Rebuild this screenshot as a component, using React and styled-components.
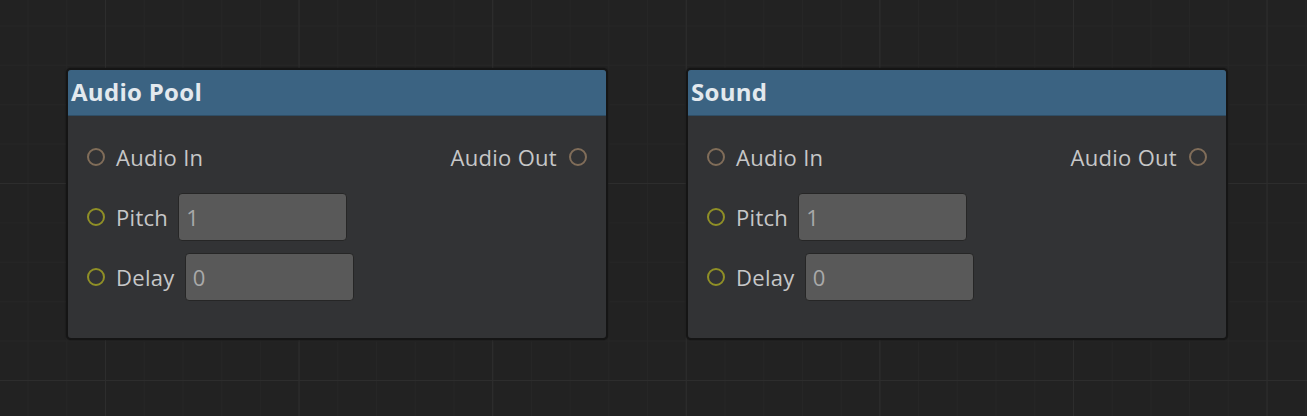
import React from "react";
import styled, { createGlobalStyle } from "styled-components";

const Global = createGlobalStyle`
  html, body { margin: 0; padding: 0; background: #222222; }
  body { font-family: "Open Sans", "Noto Sans", sans-serif; }
`;

const Canvas = styled.div`
  width: 1307px;
  height: 416px;
  box-sizing: border-box;
  padding: 68px 0 0 66px;
  display: flex;
  align-items: flex-start;
  gap: 78px;
  overflow: hidden;
  background-color: #222222;
  background-image:
    linear-gradient(to right, #2d2d2d 0, #2d2d2d 1px, transparent 1px),
    linear-gradient(to bottom, #2d2d2d 0, #2d2d2d 1px, transparent 1px),
    linear-gradient(to right, #262626 0, #262626 1px, transparent 1px),
    linear-gradient(to bottom, #262626 0, #262626 1px, transparent 1px);
  background-size: 193.6px 100%, 100% 197px, 38.72px 100%, 100% 39.4px;
  background-position: 105px 0, 0 183px, 105px 0, 0 183px;
`;

const Node = styled.div`
  width: 542px;
  height: 272px;
  box-sizing: border-box;
  border: 2px solid #151515;
  border-radius: 5px;
  background: #323335;
  overflow: hidden;
  display: flex;
  flex-direction: column;
  box-shadow: 0 0 2px rgba(0, 0, 0, 0.5);
`;

const Header = styled.div`
  height: 46px;
  flex: none;
  background: #3b6382;
  border-bottom: 1px solid #2f4e66;
  display: flex;
  align-items: center;
  padding: 0 0 3px 3px;
  box-sizing: border-box;
  color: #e3e9ee;
  font-weight: 700;
  font-size: 24px;
  letter-spacing: 0.3px;
`;

const Body = styled.div`
  padding: 17px 19px 0 19px;
  display: flex;
  flex-direction: column;
  gap: 12px;
`;

const Row = styled.div`
  height: 48px;
  display: flex;
  align-items: center;
  justify-content: ${(p) => (p.$split ? "space-between" : "flex-start")};
`;

const Port = styled.div`
  display: flex;
  align-items: center;
  gap: ${(p) => p.$gap || 11}px;
`;

const Socket = styled.span`
  width: 14px;
  height: 14px;
  flex: none;
  border-radius: 50%;
  border: 2px solid ${(p) => (p.$kind === "audio" ? "#806d59" : "#8f8f26")};
  box-sizing: content-box;
`;

const Label = styled.span`
  color: #c6c7c8;
  font-size: 22px;
  letter-spacing: 0.3px;
  line-height: 1;
  white-space: nowrap;
`;

const Field = styled.div`
  width: 169px;
  height: 48px;
  box-sizing: border-box;
  margin-left: 10px;
  background: #595959;
  border: 1px solid #262626;
  border-radius: 4px;
  display: flex;
  align-items: center;
  padding-left: 7px;
  color: #a9a9a9;
  font-size: 22px;
`;

function GraphNode({ title }) {
  return (
    <Node>
      <Header>{title}</Header>
      <Body>
        <Row $split>
          <Port>
            <Socket $kind="audio" />
            <Label>Audio In</Label>
          </Port>
          <Port $gap={12}>
            <Label>Audio Out</Label>
            <Socket $kind="audio" />
          </Port>
        </Row>
        <Row>
          <Port>
            <Socket $kind="float" />
            <Label>Pitch</Label>
          </Port>
          <Field>1</Field>
        </Row>
        <Row>
          <Port>
            <Socket $kind="float" />
            <Label>Delay</Label>
          </Port>
          <Field>0</Field>
        </Row>
      </Body>
    </Node>
  );
}

export default function App() {
  return (
    <>
      <Global />
      <Canvas>
        <GraphNode title="Audio Pool" />
        <GraphNode title="Sound" />
      </Canvas>
    </>
  );
}
